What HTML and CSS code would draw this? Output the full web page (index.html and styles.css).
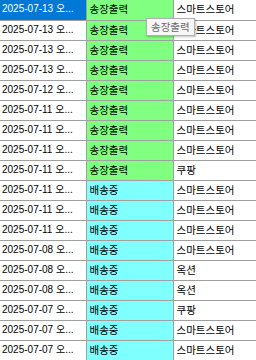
FILE: index.html
```html
<!DOCTYPE html>
<html lang="ko">
<head>
<meta charset="utf-8">
<link rel="stylesheet" href="styles.css">
</head>
<body>
<div class="grid">
  <table class="orders">
    <colgroup><col class="c1"><col class="c2"><col class="c3"></colgroup>
    <tbody>
      <tr><td class="date sel">2025-07-13 오...</td><td class="st green">송장출력</td><td class="shop">스마트스토어</td></tr>
      <tr><td class="date">2025-07-13 오...</td><td class="st green">송장출력</td><td class="shop">스마트스토어</td></tr>
      <tr><td class="date">2025-07-13 오...</td><td class="st green">송장출력</td><td class="shop">스마트스토어</td></tr>
      <tr><td class="date">2025-07-13 오...</td><td class="st green">송장출력</td><td class="shop">스마트스토어</td></tr>
      <tr><td class="date">2025-07-12 오...</td><td class="st green">송장출력</td><td class="shop">스마트스토어</td></tr>
      <tr><td class="date">2025-07-11 오...</td><td class="st green">송장출력</td><td class="shop">스마트스토어</td></tr>
      <tr><td class="date">2025-07-11 오...</td><td class="st green">송장출력</td><td class="shop">스마트스토어</td></tr>
      <tr><td class="date">2025-07-11 오...</td><td class="st green">송장출력</td><td class="shop">스마트스토어</td></tr>
      <tr><td class="date">2025-07-11 오...</td><td class="st green">송장출력</td><td class="shop">쿠팡</td></tr>
      <tr><td class="date">2025-07-11 오...</td><td class="st cyan">배송중</td><td class="shop">스마트스토어</td></tr>
      <tr><td class="date">2025-07-11 오...</td><td class="st cyan">배송중</td><td class="shop">스마트스토어</td></tr>
      <tr><td class="date">2025-07-11 오...</td><td class="st cyan">배송중</td><td class="shop">스마트스토어</td></tr>
      <tr><td class="date">2025-07-08 오...</td><td class="st cyan">배송중</td><td class="shop">스마트스토어</td></tr>
      <tr><td class="date">2025-07-08 오...</td><td class="st cyan">배송중</td><td class="shop">옥션</td></tr>
      <tr><td class="date">2025-07-08 오...</td><td class="st cyan">배송중</td><td class="shop">옥션</td></tr>
      <tr><td class="date">2025-07-07 오...</td><td class="st cyan">배송중</td><td class="shop">쿠팡</td></tr>
      <tr><td class="date">2025-07-07 오...</td><td class="st cyan">배송중</td><td class="shop">스마트스토어</td></tr>
      <tr><td class="date">2025-07-07 오...</td><td class="st cyan">배송중</td><td class="shop">스마트스토어</td></tr>
    </tbody>
  </table>
  <div class="tooltip">송장출력</div>
</div>
</body>
</html>
```
FILE: styles.css
```css
html, body {
  margin: 0;
  padding: 0;
  background: #ffffff;
  overflow: hidden;
}
.grid {
  position: relative;
  width: 256px;
  height: 360px;
  overflow: hidden;
}
.orders {
  border-collapse: collapse;
  table-layout: fixed;
  width: 257px;
  font-family: "Liberation Sans", "Noto Sans CJK KR", sans-serif;
  font-size: 10px;
  color: #000;
}
.c1 { width: 86px; }
.c2 { width: 87px; }
.c3 { width: 84px; }
.orders tr { height: 20px; }
.orders td {
  height: 20px;
  padding: 0 0 0 2px;
  border-bottom: 1px solid #a0a0a0;
  border-right: 1px solid #a0a0a0;
  white-space: nowrap;
  overflow: hidden;
  line-height: 17px;
  vertical-align: top;
  box-sizing: border-box;
}
.orders td.st,
.orders td.shop {
  padding-left: 3px;
  font-family: "Noto Sans CJK KR", sans-serif;
  font-size: 10.5px;
}
.sel {
  background: #0078d7;
  color: #ffffff;
}
.green { background: #80ff80; }
.cyan { background: #80ffff; }
.tooltip {
  position: absolute;
  left: 146px;
  top: 18px;
  padding: 0 4px;
  height: 18px;
  line-height: 16px;
  font-family: "Noto Sans CJK KR", sans-serif;
  font-size: 10.5px;
  color: #6a6a6a;
  background: #f7f7f7;
  border: 1px solid #b0b0b0;
  box-sizing: border-box;
  box-shadow: 1px 1px 2px rgba(0,0,0,0.25);
}
```
